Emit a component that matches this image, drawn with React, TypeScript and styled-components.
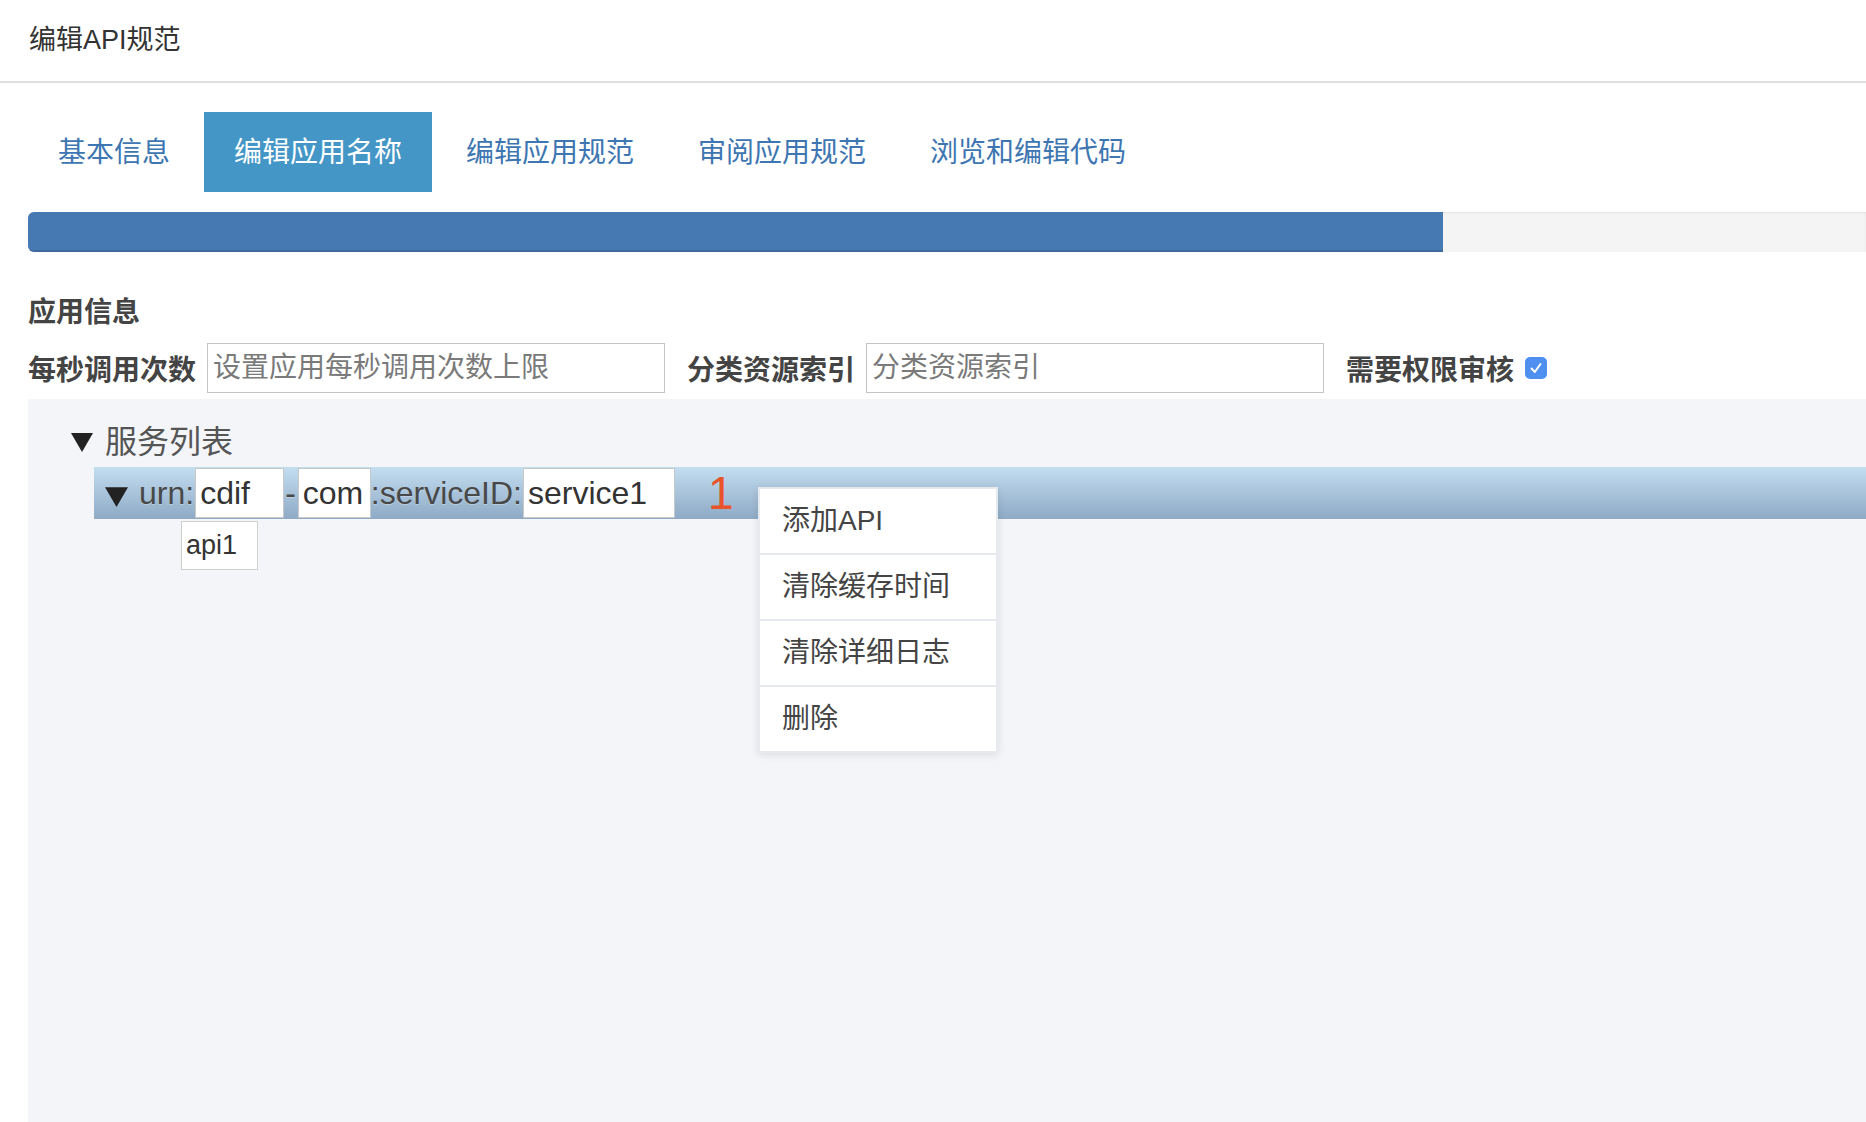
import { createGlobalStyle } from "styled-components";
import styled from "styled-components";

const GlobalStyle = createGlobalStyle`
  html, body {
    margin: 0;
    padding: 0;
    background: #fff;
    overflow: hidden;
  }
  body {
    font-family: "Liberation Sans", "Noto Sans CJK SC", sans-serif;
    color: #333;
  }
  * {
    box-sizing: border-box;
  }
`;

const tabs = ["基本信息", "编辑应用名称", "编辑应用规范", "审阅应用规范", "浏览和编辑代码"];
const menuItems = ["添加API", "清除缓存时间", "清除详细日志", "删除"];

function Caret({ size }: { size: number }) {
  return (
    <svg width={size} height={size} viewBox="0 0 22 22">
      <polygon points="0,3 22,3 11,22" fill="#222" />
    </svg>
  );
}

function App() {
  return (
    <Page>
      <GlobalStyle />
      <Header>编辑API规范</Header>
      <Main>
        <TabList>
          {tabs.map((t, i) => (
            <Tab key={t} $active={i === 1}>
              {t}
            </Tab>
          ))}
        </TabList>
        <Progress>
          <ProgressBar style={{ width: "77%" }} />
        </Progress>
        <SectionTitle>应用信息</SectionTitle>
        <FormRow>
          <Label>每秒调用次数</Label>
          <TextInput placeholder="设置应用每秒调用次数上限" />
          <Label $gap>分类资源索引</Label>
          <TextInput placeholder="分类资源索引" />
          <Label $gap>需要权限审核</Label>
          <CheckBox>
            <svg width="14" height="14" viewBox="0 0 14 14">
              <path d="M2.5 7.5 L5.8 11 L11.5 3" stroke="#fff" strokeWidth="2" fill="none" strokeLinecap="round" strokeLinejoin="round" />
            </svg>
          </CheckBox>
        </FormRow>
        <Panel>
          <TreeHead>
            <Caret size={22} />
            <span>服务列表</span>
          </TreeHead>
          <ServiceBlock>
            <ServiceRow>
              <RowCaret>
                <Caret size={23} />
              </RowCaret>
              <RowText>urn:</RowText>
              <SegInput $w={89} defaultValue="cdif" />
              <RowText $pad>-</RowText>
              <SegInput $w={73} defaultValue="com" />
              <RowText>:serviceID:</RowText>
              <SegInput $w={152} defaultValue="service1" />
              <Count>1</Count>
            </ServiceRow>
            <ApiBox>api1</ApiBox>
            <Menu>
              {menuItems.map((m) => (
                <MenuItem key={m}>{m}</MenuItem>
              ))}
            </Menu>
          </ServiceBlock>
        </Panel>
      </Main>
    </Page>
  );
}

const Page = styled.div`
  width: 100%;
  min-height: 100vh;
`;

const Header = styled.div`
  height: 83px;
  line-height: 80px;
  padding-left: 29px;
  font-size: 27px;
  color: #333;
  border-bottom: 2px solid #dedede;
`;

const Main = styled.div`
  padding-left: 28px;
`;

const TabList = styled.div`
  display: flex;
  margin-top: 29px;
`;

const Tab = styled.div<{ $active?: boolean }>`
  height: 80px;
  line-height: 82px;
  padding: 0 30px;
  margin-right: 4px;
  font-size: 28px;
  color: ${(p) => (p.$active ? "#fff" : "#3d76b1")};
  background: ${(p) => (p.$active ? "#4396c6" : "transparent")};
`;

const Progress = styled.div`
  margin-top: 20px;
  height: 40px;
  background: #f4f4f4;
  border-radius: 6px 0 0 6px;
  box-shadow: inset 0 1px 2px rgba(0, 0, 0, 0.08);
  overflow: hidden;
`;

const ProgressBar = styled.div`
  height: 100%;
  background: #4679b1;
  box-shadow: inset 0 -2px 0 rgba(0, 0, 0, 0.12);
`;

const SectionTitle = styled.div`
  margin-top: 40px;
  height: 40px;
  line-height: 42px;
  font-size: 28px;
  font-weight: bold;
  color: #444;
`;

const FormRow = styled.div`
  display: flex;
  align-items: center;
  margin-top: 11px;
  height: 50px;
`;

const Label = styled.div<{ $gap?: boolean }>`
  font-size: 28px;
  font-weight: bold;
  color: #444;
  margin-left: ${(p) => (p.$gap ? "22px" : "0")};
  margin-right: 11px;
  white-space: nowrap;
`;

const TextInput = styled.input`
  width: 458px;
  height: 50px;
  border: 1px solid #c4c4c4;
  padding: 0 5px;
  font-size: 28px;
  font-family: "Liberation Sans", "Noto Sans CJK SC", sans-serif;
  color: #333;
  outline: none;
  &::placeholder {
    color: #7a7a7a;
  }
`;

const CheckBox = styled.div`
  width: 22px;
  height: 22px;
  border-radius: 5px;
  background: #4e8ff0;
  display: flex;
  align-items: center;
  justify-content: center;
`;

const Panel = styled.div`
  margin-top: 6px;
  background: #f4f5f9;
  min-height: 730px;
  padding-top: 17px;
`;

const TreeHead = styled.div`
  display: flex;
  align-items: center;
  gap: 12px;
  padding-left: 43px;
  height: 46px;
  font-size: 32px;
  color: #555;
  svg {
    margin-top: 4px;
  }
`;

const ServiceBlock = styled.div`
  position: relative;
  margin-top: 5px;
  padding-left: 66px;
`;

const ServiceRow = styled.div`
  display: flex;
  align-items: center;
  height: 52px;
  padding-left: 11px;
  background: linear-gradient(#c3ddf0, #8eaac5);
`;

const RowCaret = styled.div`
  display: flex;
  margin-right: 11px;
  margin-top: 4px;
`;

const RowText = styled.span<{ $pad?: boolean }>`
  font-size: 32px;
  color: #484848;
  padding: 0 ${(p) => (p.$pad ? "2px" : "1px")} 0 ${(p) => (p.$pad ? "1px" : "0")};
  text-shadow: 0 1px 0 rgba(255, 255, 255, 0.3);
  white-space: nowrap;
`;

const SegInput = styled.input<{ $w: number }>`
  width: ${(p) => p.$w}px;
  height: 50px;
  border: 1px solid #c8c8c8;
  background: #fff;
  padding: 0 4px;
  font-size: 32px;
  font-family: "Liberation Sans", "Noto Sans CJK SC", sans-serif;
  color: #333;
  outline: none;
`;

const Count = styled.span`
  margin-left: 33px;
  font-size: 46px;
  font-weight: 300;
  color: #e8532a;
  line-height: 52px;
`;

const ApiBox = styled.div`
  margin-left: 87px;
  margin-top: 2px;
  width: 77px;
  height: 49px;
  line-height: 47px;
  border: 1px solid #cfcfcf;
  background: #fff;
  padding-left: 4px;
  font-size: 27px;
  color: #333;
`;

const Menu = styled.div`
  position: absolute;
  left: 730px;
  top: 20px;
  width: 240px;
  background: #e6eaef;
  padding: 2px;
  display: flex;
  flex-direction: column;
  gap: 2px;
  box-shadow: 0 2px 8px rgba(0, 0, 0, 0.1);
`;

const MenuItem = styled.div`
  height: 64px;
  line-height: 64px;
  background: #fff;
  padding-left: 22px;
  font-size: 28px;
  color: #444;
`;

export default App;
